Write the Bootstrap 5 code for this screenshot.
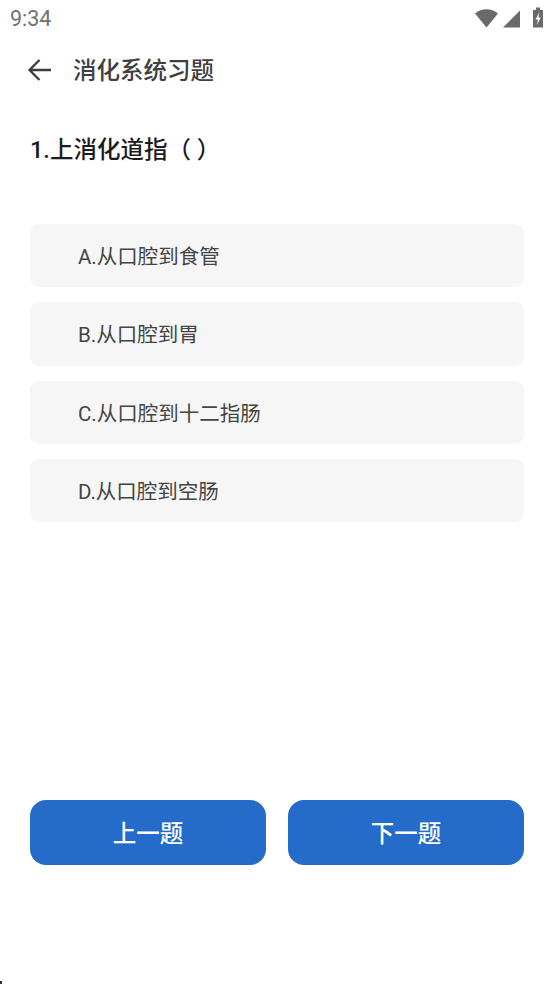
<!DOCTYPE html>
<html lang="zh-CN">
<head>
<meta charset="utf-8">
<title>消化系统习题</title>
<link href="https://cdn.jsdelivr.net/npm/bootstrap@5.3.0/dist/css/bootstrap.min.css" rel="stylesheet">
<style>
html,body{height:984px;overflow:hidden;background:#fff;}
body{font-family:Roboto,"Noto Sans CJK SC",sans-serif;position:relative;}
.status-row{height:38px;padding:0 8px 0 10px;color:#717171;font-size:21.5px;line-height:38px;}
.app-head{height:64px;padding-left:27px;}
.app-head svg{display:block;}
.app-title{margin:2px 0 0 20px;font-size:23.5px;font-weight:500;color:#404040;line-height:64px;}
.quiz-q{margin:15px 0 0;height:60px;padding:3px 30px 0;font-size:23.5px;font-weight:500;line-height:60px;color:#1c1c1c;}
.opt-list{padding:0 30px;margin-top:47px;gap:15.2px;}
.opt-item{height:63.2px;background:#f6f6f6;border-radius:9px;padding-left:48px;font-size:20.5px;line-height:67px;color:#444;}
.btn-row{position:absolute;left:30px;right:30px;top:800.4px;gap:22px;}
.quiz-btn{height:65px;width:236px;border-radius:16px;background:#256bc9;border:0;color:#fff;font-size:23.5px;font-weight:500;padding:4px 0 0;}
.quiz-btn:hover{background:#256bc9;color:#fff;}
.corner-dot{position:absolute;left:0;bottom:0;width:2px;height:3px;background:#333;}
</style>
</head>
<body>
<div class="status-row d-flex justify-content-between align-items-center">
  <span>9:34</span>
  <svg width="72" height="24" viewBox="0 0 72 24" class="d-block" aria-hidden="true">
    <path d="M1 6.500C4.500 3.500 8.500 2.300 12.500 2.300S20.500 3.500 24 6.500L12.500 20.500Z" fill="#6a6a6a"/>
    <path d="M29 20.500 46 3.500V20.500Z" fill="#6a6a6a"/>
    <path d="M59 3H62V.5H66V3H69V20.500H59Z" fill="#6a6a6a"/>
    <path d="M65.500 5 61.500 12.500H64L62.800 18 66.800 10.500H64.300Z" fill="#fff"/>
  </svg>
</div>
<div class="app-head d-flex align-items-center">
  <svg width="26" height="24" viewBox="0 0 26 24" aria-hidden="true"><path d="M24 12H3M12.500 2 2.500 12 12.500 22" fill="none" stroke="#3d3d3d" stroke-width="2.300"/></svg>
  <h1 class="app-title">消化系统习题</h1>
</div>
<p class="quiz-q">1.上消化道指（ ）</p>
<div class="opt-list d-flex flex-column">
  <div class="opt-item">A.从口腔到食管</div>
  <div class="opt-item">B.从口腔到胃</div>
  <div class="opt-item">C.从口腔到十二指肠</div>
  <div class="opt-item">D.从口腔到空肠</div>
</div>
<div class="btn-row d-flex">
  <button type="button" class="btn quiz-btn">上一题</button>
  <button type="button" class="btn quiz-btn">下一题</button>
</div>
<div class="corner-dot"></div>
<script src="https://cdn.jsdelivr.net/npm/bootstrap@5.3.0/dist/js/bootstrap.bundle.min.js"></script>
</body>
</html>
